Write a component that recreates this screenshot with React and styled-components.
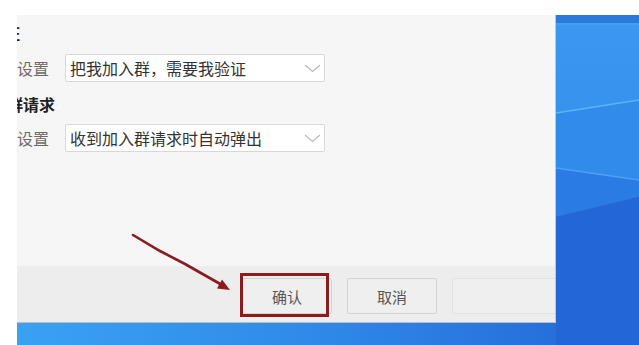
import React from 'react';
import styled, { createGlobalStyle } from 'styled-components';

const GlobalStyle = createGlobalStyle`
  html, body {
    margin: 0;
    padding: 0;
    background: #ffffff;
  }
  body {
    font-family: "Noto Sans CJK SC", "Noto Sans", sans-serif;
  }
`;

const Screen = styled.div`
  position: relative;
  width: 639px;
  height: 345px;
  box-sizing: border-box;
  padding: 15px 0 0 17px;
  background: #ffffff;
  overflow: hidden;
`;

const Desktop = styled.div`
  display: grid;
  width: 622px;
  height: 330px;
  overflow: hidden;
`;

const Wallpaper = styled.svg`
  grid-area: 1 / 1;
  display: block;
`;

const Window = styled.div`
  grid-area: 1 / 1;
  align-self: start;
  justify-self: start;
  z-index: 1;
  display: flex;
  flex-direction: column;
  width: 539px;
  height: 308px;
  box-sizing: border-box;
  background: #f6f6f6;
  border-right: 1px solid #c6c6c6;
  overflow: hidden;
`;

const Body = styled.div`
  display: flex;
  flex-direction: column;
  height: 251px;
  padding-top: 8px;
  box-sizing: border-box;
`;

const SectionTitle = styled.div`
  margin-left: ${p => p.$indent}px;
  margin-top: ${p => p.$top || 0}px;
  font-size: 16px;
  line-height: 20px;
  font-weight: 700;
  color: #222;
  white-space: nowrap;
`;

const Row = styled.div`
  display: flex;
  align-items: center;
  gap: 16px;
  margin-left: -32px;
  margin-top: ${p => p.$top}px;
`;

const Label = styled.span`
  width: 64px;
  text-align: right;
  font-size: 16px;
  line-height: 20px;
  color: #6b6b6b;
  white-space: nowrap;
`;

const Select = styled.div`
  display: flex;
  align-items: center;
  justify-content: space-between;
  width: 260px;
  height: 28px;
  box-sizing: border-box;
  padding: 0 3px 0 4px;
  background: #ffffff;
  border: 1px solid #d8d8d8;
  border-radius: 2px;
  font-size: 16px;
  color: #333;
  white-space: nowrap;
`;

const Footer = styled.div`
  display: flex;
  align-items: flex-start;
  gap: 15px;
  height: 57px;
  box-sizing: border-box;
  padding: 12px 0 0 225px;
  background: #ededed;
  border-bottom: 1px solid #bdbdbd;
`;

const Button = styled.div`
  flex: none;
  display: flex;
  align-items: center;
  justify-content: center;
  width: ${p => (p.$wide ? 130 : 90)}px;
  height: 36px;
  box-sizing: border-box;
  background: #efefef;
  border: 1px solid ${p => (p.$ghost ? '#e2e2e2' : '#d2d2d2')};
  border-radius: 3px;
  font-size: 15px;
  color: #555;
`;

const Highlight = styled.div`
  position: absolute;
  left: 240px;
  top: 273px;
  width: 89px;
  height: 44px;
  box-sizing: border-box;
  border: 3px solid #8a1b1f;
  z-index: 2;
`;

const Annotation = styled.svg`
  position: absolute;
  left: 0;
  top: 0;
  z-index: 3;
  pointer-events: none;
`;

const Chevron = () => (
  <svg width="17" height="9" viewBox="0 0 17 9">
    <path d="M1 1 L8.5 7.5 L16 1" fill="none" stroke="#b9b9b9" strokeWidth="1.2" />
  </svg>
);

const WallpaperArt = () => (
  <Wallpaper width="622" height="330" viewBox="0 0 622 330">
    <defs>
      <linearGradient id="floor" x1="0" y1="0" x2="1" y2="0">
        <stop offset="0" stopColor="#3aa2f2" />
        <stop offset="0.5" stopColor="#2f88e8" />
        <stop offset="1" stopColor="#2366d6" />
      </linearGradient>
      <linearGradient id="sky" x1="0" y1="0" x2="0" y2="1">
        <stop offset="0" stopColor="#3b97f0" />
        <stop offset="1" stopColor="#348eec" />
      </linearGradient>
    </defs>
    <rect width="622" height="330" fill="url(#floor)" />
    <rect x="539" y="0" width="83" height="8" fill="#2a7ade" />
    <polygon points="539,8 622,8 622,165 539,153" fill="url(#sky)" />
    <polygon points="539,98 622,85 622,165 539,153" fill="#318bea" />
    <polygon points="539,153 622,165 622,182 539,202" fill="#2a7be4" />
    <polygon points="539,202 622,182 622,330 539,330" fill="#2366d6" />
    <line x1="539" y1="98" x2="622" y2="85" stroke="#5cb4f6" strokeWidth="1.5" />
    <line x1="539" y1="153" x2="622" y2="165" stroke="#4aa3f2" strokeWidth="1.5" />
    <line x1="539" y1="9" x2="622" y2="9" stroke="#4fa6f3" strokeWidth="1" />
  </Wallpaper>
);

export default function App() {
  return (
    <>
      <GlobalStyle />
      <Screen>
        <Desktop>
          <WallpaperArt />
          <Window>
            <Body>
              <SectionTitle $indent={-61}>加群验证</SectionTitle>
              <Row $top={11}>
                <Label>验证设置</Label>
                <Select>
                  把我加入群，需要我验证
                  <Chevron />
                </Select>
              </Row>
              <SectionTitle $indent={-26} $top={12}>入群请求</SectionTitle>
              <Row $top={10}>
                <Label>提醒设置</Label>
                <Select>
                  收到加入群请求时自动弹出
                  <Chevron />
                </Select>
              </Row>
            </Body>
            <Footer>
              <Button>确认</Button>
              <Button>取消</Button>
              <Button $wide $ghost />
            </Footer>
          </Window>
        </Desktop>
        <Highlight />
        <Annotation width="639" height="345" viewBox="0 0 639 345">
          <path
            d="M133 235 L160 251 L185 264 L222 285"
            fill="none"
            stroke="#8a1b1f"
            strokeWidth="2.6"
            strokeLinecap="round"
          />
          <polygon points="230,290 222,279.5 217,288.5" fill="#8a1b1f" />
        </Annotation>
      </Screen>
    </>
  );
}
